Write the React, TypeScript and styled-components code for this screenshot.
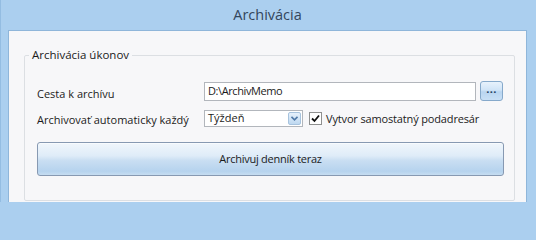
import React, { FC } from 'react'
import styled, { createGlobalStyle } from 'styled-components'

const GlobalStyle = createGlobalStyle`
  html, body {
    margin: 0;
    padding: 0;
    background: #abcfef;
    overflow: hidden;
  }
  body {
    font-family: "Open Sans", "Noto Sans", "Liberation Sans", sans-serif;
    font-size: 11px;
    color: #1b1b1b;
  }
`

const Window = styled.div`
  width: 536px;
  height: 202px;
  box-sizing: border-box;
  display: flex;
  flex-direction: column;
  background: #abcfef;
  border-left: 1px solid #94bde2;
  padding: 0 9px 0 7px;
`

const TitleBar = styled.div`
  height: 30px;
  flex-shrink: 0;
  display: flex;
  align-items: center;
  justify-content: center;
  font-size: 14.5px;
  color: #33465c;
  padding-bottom: 1px;
  box-sizing: border-box;
`

const Panel = styled.div`
  flex: 1;
  background: #f7f7f9;
  border: 1px solid #8fb6da;
  border-bottom: none;
  padding: 16px 11px 1px 15px;
  display: flex;
  flex-direction: column;
`

const GroupBox = styled.fieldset`
  margin: 0;
  padding: 0;
  border: 1px solid #dcdfe3;
  border-radius: 2px;
  flex: 1;
  min-width: 0;
`

const Legend = styled.legend`
  margin-left: 4px;
  padding: 0 3px;
  font-size: 11.5px;
  line-height: 16px;
`

const Content = styled.div`
  display: flex;
  flex-direction: column;
  padding: 18px 10px 0 12px;
`

const Row = styled.div<{ $gap?: number }>`
  display: flex;
  align-items: center;
  margin-top: ${({ $gap }) => $gap ?? 0}px;
`

const Label = styled.div<{ $shift?: number }>`
  width: 167px;
  flex-shrink: 0;
  padding-top: ${({ $shift }) => $shift ?? 0}px;
`

const TextBox = styled.div`
  width: 272px;
  height: 19px;
  box-sizing: border-box;
  border: 1px solid #b2b6bc;
  background: #ffffff;
  padding: 0 3px;
  line-height: 15px;
  letter-spacing: -0.4px;
`

const BrowseButton = styled.button`
  width: 23px;
  height: 20px;
  margin-left: 4px;
  padding: 0 0 4px;
  border: 1px solid #86a9cb;
  border-radius: 3px;
  background: linear-gradient(#e8f2fc 0%, #d0e4f7 45%, #b9d5f0 55%, #c9e0f6 100%);
  color: #23415f;
  font-family: inherit;
  font-size: 11px;
  font-weight: 700;
  line-height: 12px;
  letter-spacing: 0.3px;
`

const Combo = styled.div`
  width: 99px;
  height: 17px;
  box-sizing: border-box;
  border: 1px solid #b2b6bc;
  background: #ffffff;
  display: flex;
  align-items: center;
  justify-content: space-between;
  padding: 0 1px 0 3px;
`

const ComboText = styled.span`
  line-height: 14px;
  margin-top: -2px;
`

const ComboArrow = styled.div`
  width: 13px;
  height: 13px;
  box-sizing: border-box;
  border: 1px solid #a7c3de;
  border-radius: 2px;
  background: linear-gradient(#e6f1fc, #bed8f0);
  display: flex;
  align-items: center;
  justify-content: center;
`

const Check = styled.label`
  display: flex;
  align-items: center;
  margin-left: 6px;
  letter-spacing: -0.15px;
`

const CheckBox = styled.div`
  width: 13px;
  height: 13px;
  box-sizing: border-box;
  border: 1px solid #8e8f8f;
  background: #ffffff;
  margin-right: 4px;
  display: flex;
  align-items: center;
  justify-content: center;
`

const ActionButton = styled.button`
  margin-top: 15px;
  height: 34px;
  border: 1px solid #8799b2;
  border-radius: 3px;
  background: linear-gradient(#f0f6fc 0%, #dfecf8 40%, #c9def2 55%, #b6d3ee 88%, #c6ddf1 100%);
  box-shadow: inset 0 1px 0 #f8fbfe;
  font-family: inherit;
  font-size: 11px;
  letter-spacing: -0.25px;
  color: #1b1b1b;
  padding: 0 0 2px;
`

const App: FC = () => {
  return (
    <>
      <GlobalStyle />
      <Window>
        <TitleBar>Archivácia</TitleBar>
        <Panel>
          <GroupBox>
            <Legend>Archivácia úkonov</Legend>
            <Content>
              <Row>
                <Label $shift={5}>Cesta k archívu</Label>
                <TextBox>D:\ArchivMemo</TextBox>
                <BrowseButton>...</BrowseButton>
              </Row>
              <Row $gap={9}>
                <Label $shift={2}>Archivovať automaticky každý</Label>
                <Combo>
                  <ComboText>Týždeň</ComboText>
                  <ComboArrow>
                    <svg width="7" height="5" viewBox="0 0 7 5">
                      <path d="M0.5 0.8 L3.5 3.8 L6.5 0.8" fill="none" stroke="#4f79a8" strokeWidth="1.6" />
                    </svg>
                  </ComboArrow>
                </Combo>
                <Check>
                  <CheckBox>
                    <svg width="9" height="9" viewBox="0 0 9 9">
                      <path d="M1 4.5 L3.5 7 L8 1.5" fill="none" stroke="#111" strokeWidth="1.8" />
                    </svg>
                  </CheckBox>
                  Vytvor samostatný podadresár
                </Check>
              </Row>
              <ActionButton>Archivuj denník teraz</ActionButton>
            </Content>
          </GroupBox>
        </Panel>
      </Window>
    </>
  )
}

export default App
